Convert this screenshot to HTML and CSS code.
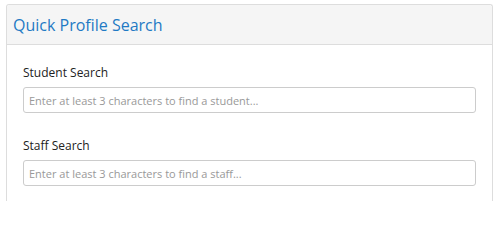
FILE: index.html
```html
<!DOCTYPE html>
<html>
<head>
<meta charset="utf-8">
<link rel="stylesheet" href="styles.css">
</head>
<body>
<div class="panel">
  <div class="panel-heading"><h3 class="panel-title">Quick Profile Search</h3></div>
  <div class="panel-body">
    <div class="form-group">
      <label class="label">Student Search</label>
      <input class="input" type="text" placeholder="Enter at least 3 characters to find a student...">
    </div>
    <div class="form-group">
      <label class="label">Staff Search</label>
      <input class="input" type="text" placeholder="Enter at least 3 characters to find a staff...">
    </div>
  </div>
</div>
</body>
</html>
```
FILE: styles.css
```css
html, body { margin: 0; padding: 0; background: #fff; }
html { height: 201px; overflow: hidden; }
body { padding: 4px 7px 0 6px; font-family: "Open Sans", "Noto Sans", sans-serif; color: #222; height: 197px; overflow: hidden; }
.panel {
  border: 1px solid #ddd;
  border-bottom: none;
  border-radius: 3px 3px 0 0;
  height: 197px;
  box-sizing: border-box;
}
.panel-heading {
  background: #f5f5f5;
  border-bottom: 1px solid #ddd;
  height: 39px;
  display: flex;
  align-items: center;
  padding: 0 6px;
  border-radius: 3px 3px 0 0;
}
.panel-title {
  margin: 0;
  font-size: 16px;
  font-weight: 400;
  color: #1f7ac4;
  letter-spacing: 0;
}
.panel-body { padding: 19px 16px 0 16px; }
.form-group { display: flex; flex-direction: column; margin-bottom: 24px; }
.label { font-size: 12px; line-height: 18px; margin-bottom: 5px; color: #222; }
.input {
  box-sizing: border-box;
  height: 26px;
  border: 1px solid #ccc;
  border-radius: 3px;
  padding: 0 5px;
  font-family: inherit;
  font-size: 11px;
  color: #555;
}
.input::placeholder { color: #999; }
```
